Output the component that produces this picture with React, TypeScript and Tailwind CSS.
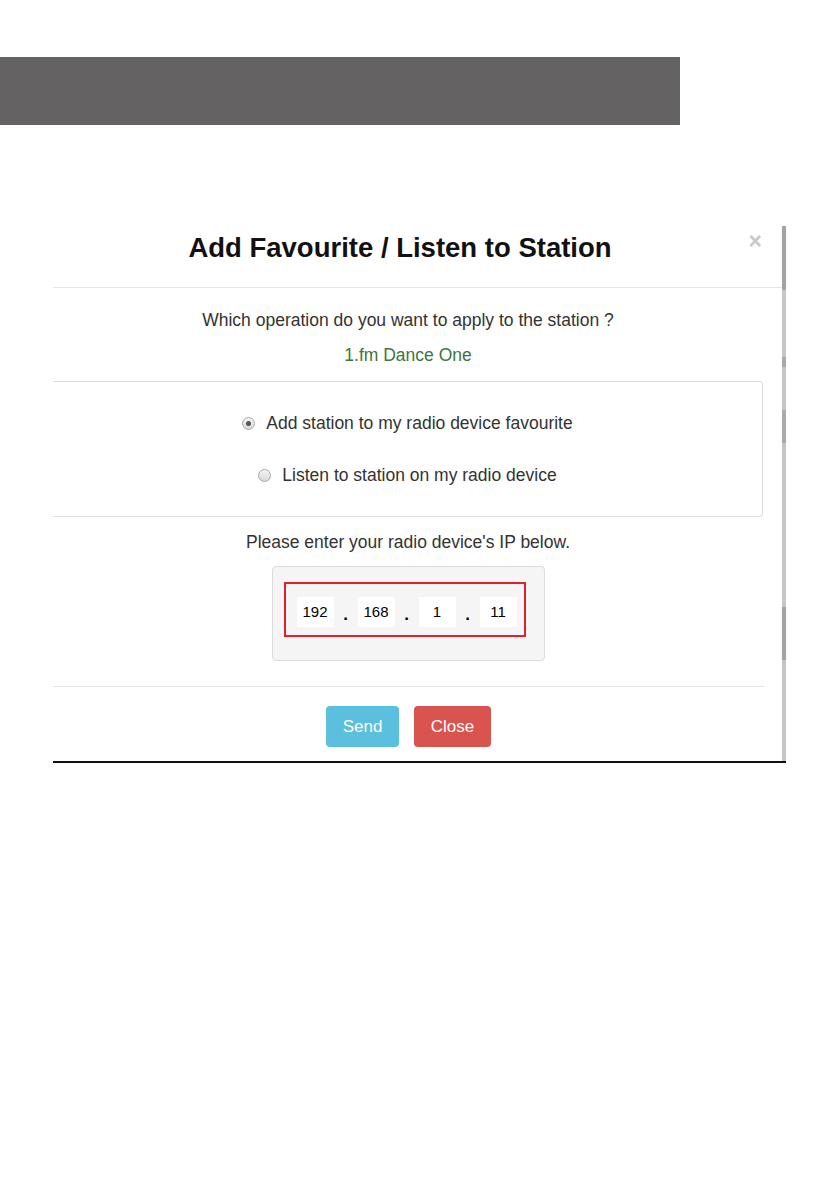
const Radio = ({ checked }: { checked?: boolean }) => (
  <span className="flex h-[13px] w-[13px] items-center justify-center rounded-full border border-[#a9a9a9] bg-gradient-to-b from-[#f4f4f4] to-[#d8d8d8]">
    {checked && <span className="h-[5px] w-[5px] rounded-full bg-[#555]" />}
  </span>
);

const Octet = ({ value }: { value: string }) => (
  <div className="flex h-[30px] w-[37px] items-center justify-center bg-white text-[15px] text-black">
    {value}
  </div>
);

const Dot = () => (
  <div className="flex h-[30px] w-[24px] items-end justify-center pb-[4px] text-[17px] font-bold leading-[17px] text-black">.</div>
);

export default function App() {
  return (
    <div className="min-h-[1191px] w-[839px] bg-white pt-[57px] font-['Liberation_Sans',Arial,sans-serif] text-[#333]">
      <div className="h-[68px] w-[680px] bg-[#646262]" />

      <div className="ml-[53px] mt-[101px] flex w-[733px] border-b-2 border-[#111]">
        <div className="flex-1">
          {/* header */}
          <div className="relative flex h-[62px] justify-center border-b border-[#e5e5e5] pr-[35px] pt-[7px]">
            <h2 className="text-[27.5px] font-bold leading-[30px] text-[#111]">Add Favourite / Listen to Station</h2>
            <span className="absolute right-[20px] top-[2px] text-[23px] font-bold leading-[26px] text-[#c8c8c8]">×</span>
          </div>

          {/* body */}
          <div className="flex w-[710px] flex-col items-center pt-[20px]">
            <p className="text-[17.5px] leading-[24px]">Which operation do you want to apply to the station ?</p>
            <p className="mt-[11px] text-[17.5px] leading-[24px] text-[#3c763d]">1.fm Dance One</p>

            <div className="mt-[14px] flex w-full flex-col items-center gap-[28px] rounded-r-[4px] border-y border-r border-[#dcdcdc] py-[29px]">
              <label className="flex items-center gap-[11px] text-[17.5px] leading-[24px]">
                <Radio checked />
                Add station to my radio device favourite
              </label>
              <label className="flex items-center gap-[11px] text-[17.5px] leading-[24px]">
                <Radio />
                Listen to station on my radio device
              </label>
            </div>

            <p className="mt-[13px] text-[17.5px] leading-[24px]">Please enter your radio device's IP below.</p>

            <div className="mt-[12px] flex h-[95px] w-[273px] items-start rounded-[4px] border border-[#dcdcdc] bg-[#f5f5f5] pl-[11px] pt-[15px]">
              <div className="flex h-[55px] w-[242px] items-start border-2 border-[#e0202a] pl-[11px] pt-[13px]">
                <Octet value="192" />
                <Dot />
                <Octet value="168" />
                <Dot />
                <Octet value="1" />
                <Dot />
                <Octet value="11" />
              </div>
            </div>
          </div>

          {/* footer */}
          <div className="mt-[25px] flex w-[711px] justify-center gap-[15px] border-t border-[#e5e5e5] pb-[14px] pt-[19px]">
            <button className="h-[41px] w-[73px] rounded-[4px] bg-[#5bc0de] text-[17px] text-white">Send</button>
            <button className="h-[41px] w-[77px] rounded-[4px] bg-[#d9534f] text-[17px] text-white">Close</button>
          </div>
        </div>

        {/* scrollbar strip */}
        <div className="flex w-[4px] flex-col bg-[#c6c6c6]">
          <div className="h-[64px] bg-[#a3a3a3]" />
          <div className="mt-[67px] h-[10px] bg-[#a8a8a8]" />
          <div className="mt-[43px] h-[33px] bg-[#ababab]" />
          <div className="mt-[164px] h-[53px] bg-[#a3a3a3]" />
        </div>
      </div>
    </div>
  );
}
